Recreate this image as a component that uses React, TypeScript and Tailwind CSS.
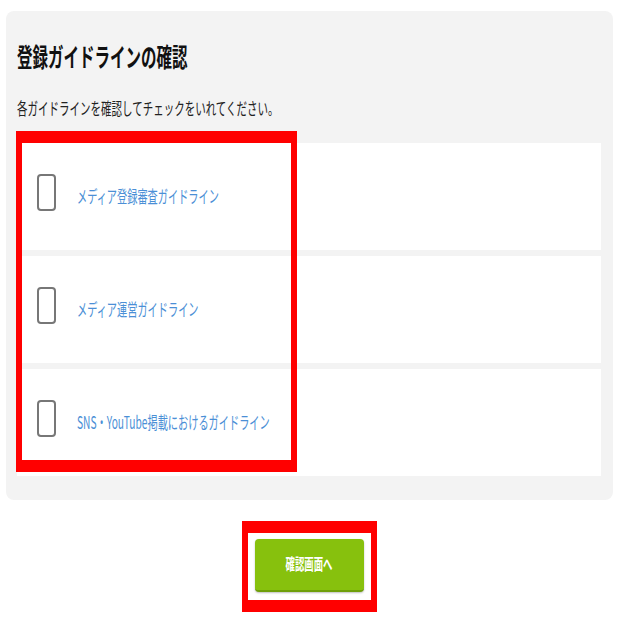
import React from "react";

const guidelines = [
	"メディア登録審査ガイドライン",
	"メディア運営ガイドライン",
	"SNS・YouTube掲載におけるガイドライン",
];

const App: React.FC = () => {
	return (
		<div
			className="w-[621px] h-[621px] bg-white pt-[11px] pl-[6px] pr-[8px]"
			style={{ fontFamily: '"Noto Sans CJK JP", "Noto Sans", sans-serif' }}
		>
			<div className="relative bg-[#f3f3f3] rounded-lg pl-[11px] pr-[12px] pb-[24px]">
				<div className="h-[91px] flex items-center pt-[1px]">
					<h2 className="inline-block text-[15.5px] font-bold text-[#111] leading-none scale-y-[1.65]">
						登録ガイドラインの確認
					</h2>
				</div>
				<div className="h-[41px] flex items-start">
					<p className="inline-block text-[10.5px] text-[#222] leading-none scale-y-[1.6] mt-[2px]">
						各ガイドラインを確認してチェックをいれてください。
					</p>
				</div>
				<div className="flex flex-col gap-[6px]">
					{guidelines.map((g) => (
						<label
							key={g}
							className="h-[107px] bg-white flex items-center pl-[20px] gap-[21px]"
						>
							<span className="w-[19px] h-[37px] border-2 border-[#777] rounded-[4px] bg-white -mt-[8px]" />
							<span className="inline-block text-[10.2px] text-[#4b8fd6] leading-none scale-y-[1.7]">
								{g}
							</span>
						</label>
					))}
				</div>
				<div className="absolute left-[10px] top-[120px] w-[281px] h-[341px] border-x-[6px] border-y-[12px] border-[#ff0000]" />
			</div>
			<div className="flex justify-center pt-[39px] pr-[1px]">
				<div className="relative">
					<button className="w-[109px] h-[53px] bg-[#87c10d] rounded-[4px] border-b-2 border-[#6f9f0a] shadow-[0_1px_2px_rgba(0,0,0,0.25)] flex items-center justify-center">
						<span className="inline-block text-[9.4px] font-bold text-white leading-none scale-y-[1.7]">
							確認画面へ
						</span>
					</button>
					<div className="absolute -left-[13px] -top-[18px] w-[135px] h-[91px] border-x-[6px] border-y-[12px] border-[#ff0000]" />
				</div>
			</div>
		</div>
	);
};

export default App;
